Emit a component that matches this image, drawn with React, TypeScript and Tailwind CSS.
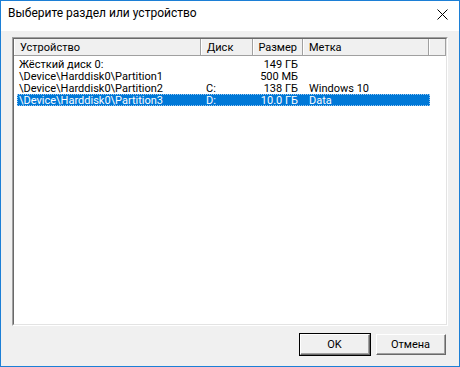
const rows = [
  { name: 'Жёсткий диск 0:', disk: '', size: '149 ГБ', label: '' },
  { name: '\\Device\\Harddisk0\\Partition1', disk: '', size: '500 МБ', label: '' },
  { name: '\\Device\\Harddisk0\\Partition2', disk: 'C:', size: '138 ГБ', label: 'Windows 10' },
  { name: '\\Device\\Harddisk0\\Partition3', disk: 'D:', size: '10.0 ГБ', label: 'Data', selected: true },
];

const HeaderCell = ({ w, children, right }: { w: string; children?: React.ReactNode; right?: boolean }) => (
  <div className={`${w} h-full flex items-center border-l border-white border-r border-r-[#a0a0a0] px-[5px] ${right ? 'justify-end' : ''}`}>
    {children}
  </div>
);

const Button = ({ children, isDefault }: { children: React.ReactNode; isDefault?: boolean }) => (
  <div className={`w-[72px] h-[23px] ${isDefault ? 'border border-black' : 'border border-transparent'}`}>
    <div className="w-full h-full border-t border-l border-white border-r border-b border-r-[#696969] border-b-[#696969]">
      <div className="w-full h-full flex items-center justify-center bg-[#f0f0f0] border-r border-b border-r-[#a0a0a0] border-b-[#a0a0a0]">
        {children}
      </div>
    </div>
  </div>
);

export default function App() {
  return (
    <div
      className="w-[460px] h-[367px] flex flex-col border border-[#1c7fd6] bg-[#f0f0f0] text-black text-[11px] leading-none"
      style={{ fontFamily: 'Roboto, "Liberation Sans", Arial, sans-serif' }}
    >
      <div className="h-[30px] bg-white flex items-center justify-between pl-[7px] pr-[11px]">
        <span className="text-[12px] mt-[-6px]">Выберите раздел или устройство</span>
        <svg width="11" height="11" viewBox="0 0 11 11" className="mt-[-3px]">
          <path d="M0.5 0.5L10.5 10.5M10.5 0.5L0.5 10.5" stroke="#000" strokeWidth="1" />
        </svg>
      </div>
      <div className="flex-1 flex flex-col px-[11px] pt-[6px] pb-[10px]">
        <div className="h-[289px] border-t border-l border-[#a0a0a0] border-r border-b border-r-white border-b-white">
          <div className="w-full h-full bg-white border-t border-l border-[#696969] border-r border-b border-r-[#e3e3e3] border-b-[#e3e3e3] flex flex-col">
            <div className="h-[17px] flex bg-[#f0f0f0] border-b border-[#a0a0a0]">
              <HeaderCell w="w-[187px]">Устройство</HeaderCell>
              <HeaderCell w="w-[52px]">Диск</HeaderCell>
              <HeaderCell w="w-[50px]" right>Размер</HeaderCell>
              <HeaderCell w="w-[126px]">Метка</HeaderCell>
              <HeaderCell w="flex-1" />
            </div>
            <div className="flex flex-col pt-[2px]">
              {rows.map((r) => (
                <div key={r.name} className="h-[12px] flex items-center">
                  <div
                    className={`ml-[3px] w-[413px] h-full flex items-center ${
                      r.selected ? 'bg-[#0078d7] text-white outline-1 outline-dotted outline-offset-[-1px] outline-[#9cc8f0]' : ''
                    }`}
                  >
                    <div className="w-[184px] pl-[2px] whitespace-nowrap">{r.name}</div>
                    <div className="w-[52px] pl-[5px]">{r.disk}</div>
                    <div className="w-[50px] pr-[5px] text-right whitespace-nowrap">{r.size}</div>
                    <div className="flex-1 pl-[6px] whitespace-nowrap">{r.label}</div>
                  </div>
                </div>
              ))}
            </div>
          </div>
        </div>
        <div className="flex-1 flex items-end justify-end gap-[4px] pr-[1px]">
          <Button isDefault>OK</Button>
          <Button>Отмена</Button>
        </div>
      </div>
    </div>
  );
}
